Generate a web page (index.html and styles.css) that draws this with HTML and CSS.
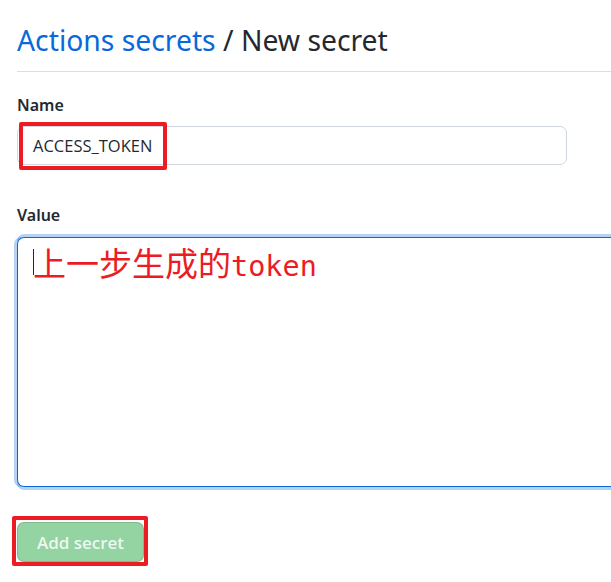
FILE: index.html
```html
<!DOCTYPE html>
<html lang="en">
<head>
<meta charset="utf-8">
<title>New secret</title>
<link rel="stylesheet" href="styles.css">
</head>
<body>
<div class="page">
  <h1 class="title"><a class="crumb" href="#">Actions secrets</a> / New secret</h1>
  <form class="form">
    <div class="group">
      <label class="label">Name</label>
      <div class="field">
        <div class="input">ACCESS_TOKEN</div>
        <div class="mark mark-name"></div>
      </div>
    </div>
    <div class="group group-value">
      <label class="label">Value</label>
      <div class="textarea"><span class="caret"></span><span class="hint">上一步生成的<span class="mono">token</span></span></div>
    </div>
    <div class="actions">
      <div class="field">
        <button type="button" class="btn" disabled>Add secret</button>
        <div class="mark mark-btn"></div>
      </div>
    </div>
  </form>
</div>
</body>
</html>
```
FILE: styles.css
```css
html, body {
  margin: 0;
  padding: 0;
  background: #ffffff;
}
body {
  font-family: "Noto Sans", "Open Sans", sans-serif;
  color: #24292f;
}
.page {
  padding-left: 17px;
  width: 611px;
  height: 582px;
  box-sizing: border-box;
  overflow: hidden;
}
.title {
  margin: 0;
  padding-top: 18px;
  padding-bottom: 9px;
  font-size: 28.3px;
  line-height: 44px;
  font-weight: 400;
  color: #24292f;
  border-bottom: 1px solid #d8dee4;
}
.crumb {
  color: #0969da;
  text-decoration: none;
}
.form {
  display: flex;
  flex-direction: column;
}
.group {
  display: flex;
  flex-direction: column;
  margin-top: 20px;
}
.group-value {
  margin-top: 37px;
}
.label {
  font-size: 16px;
  font-weight: 600;
  line-height: 26px;
  margin-bottom: 8px;
}
.field {
  position: relative;
  align-self: flex-start;
}
.input {
  box-sizing: border-box;
  width: 550px;
  height: 39px;
  border: 1px solid #d0d7de;
  border-radius: 7px;
  padding: 0 15px;
  font-size: 16.5px;
  line-height: 37px;
  color: #24292f;
  font-family: "Open Sans", "Noto Sans", sans-serif;
}
.mark {
  position: absolute;
  border: 4px solid #ec1c24;
  border-radius: 2px;
}
.mark-name {
  left: 2px;
  top: -4px;
  bottom: -5px;
  width: 140px;
}
.textarea {
  box-sizing: border-box;
  margin-top: 1px;
  width: 620px;
  height: 250px;
  border: 1.5px solid #0969da;
  border-right: 0;
  border-radius: 7px 0 0 7px;
  box-shadow: -3px 0 0 0 rgba(9, 105, 218, 0.3), 0 -3px 0 0 rgba(9, 105, 218, 0.3), 0 3px 0 0 rgba(9, 105, 218, 0.3);
  padding: 6px 15px;
  display: flex;
  align-items: flex-start;
}
.caret {
  display: inline-block;
  width: 1px;
  height: 26px;
  margin-top: 5px;
  background: #24292f;
  margin-right: -1px;
}
.hint {
  color: #ec1c24;
  font-family: "Noto Sans CJK SC", sans-serif;
  font-size: 33px;
  line-height: 36px;
}
.mono {
  font-family: "DejaVu Sans Mono", "Liberation Mono", monospace;
  font-size: 28.5px;
}
.actions {
  margin-top: 35px;
  display: flex;
}
.btn {
  box-sizing: border-box;
  width: 127px;
  height: 40px;
  display: block;
  border: 1px solid rgba(27, 31, 36, 0.15);
  border-radius: 7px;
  background: #94d3a2;
  color: rgba(255, 255, 255, 0.85);
  font-family: "Open Sans", "Noto Sans", sans-serif;
  font-size: 17px;
  font-weight: 600;
  padding: 0;
}
.mark-btn {
  left: -5px;
  right: -4px;
  top: -6px;
  bottom: -4px;
}
```
